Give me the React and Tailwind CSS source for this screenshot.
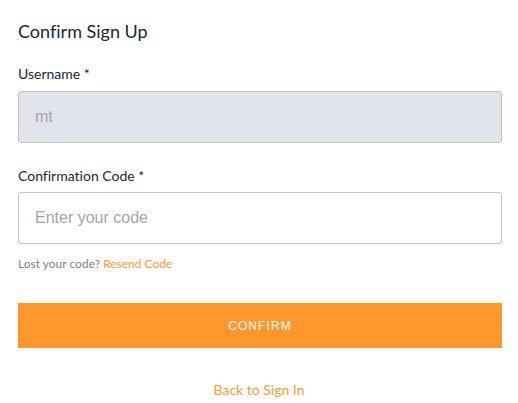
export default function App() {
  return (
    <div className="w-[518px] h-[403px] bg-white px-[18px] pt-[19px] font-['Lato',sans-serif] [font-variant-ligatures:none]">
      <h1 className="text-[18px] leading-[24px] text-[#152939]">Confirm Sign Up</h1>
      <div className="mt-[21px]">
        <label className="block text-[14px] leading-[20px] text-[#152939]">Username *</label>
        <div className="mt-[7px] h-[52px] w-[484px] rounded-[3px] border border-[#c4c4c4] bg-[#e1e4ea] px-4 flex items-center font-['Liberation_Sans',sans-serif] text-[16px] text-[#a5a5a5]">
          mt
        </div>
      </div>
      <div className="mt-[23px]">
        <label className="block text-[14px] leading-[20px] text-[#152939]">Confirmation Code *</label>
        <div className="mt-[6px] h-[52px] w-[484px] rounded-[3px] border border-[#c4c4c4] bg-white px-4 flex items-center font-['Liberation_Sans',sans-serif] text-[16px] text-[#a5a5a5]">
          Enter your code
        </div>
      </div>
      <p className="mt-[12px] text-[12px] leading-[16px] text-[#828282]">
        Lost your code? <span className="text-[#ff9a2e]">Resend Code</span>
      </p>
      <button className="mt-[31px] h-[45px] w-[484px] bg-[#ff972c] text-white text-[12px] tracking-[1.1px] font-['Liberation_Sans',sans-serif]">
        CONFIRM
      </button>
      <div className="mt-[32px] text-center text-[14px] leading-[20px] text-[#ff9a2e]">Back to Sign In</div>
    </div>
  );
}
